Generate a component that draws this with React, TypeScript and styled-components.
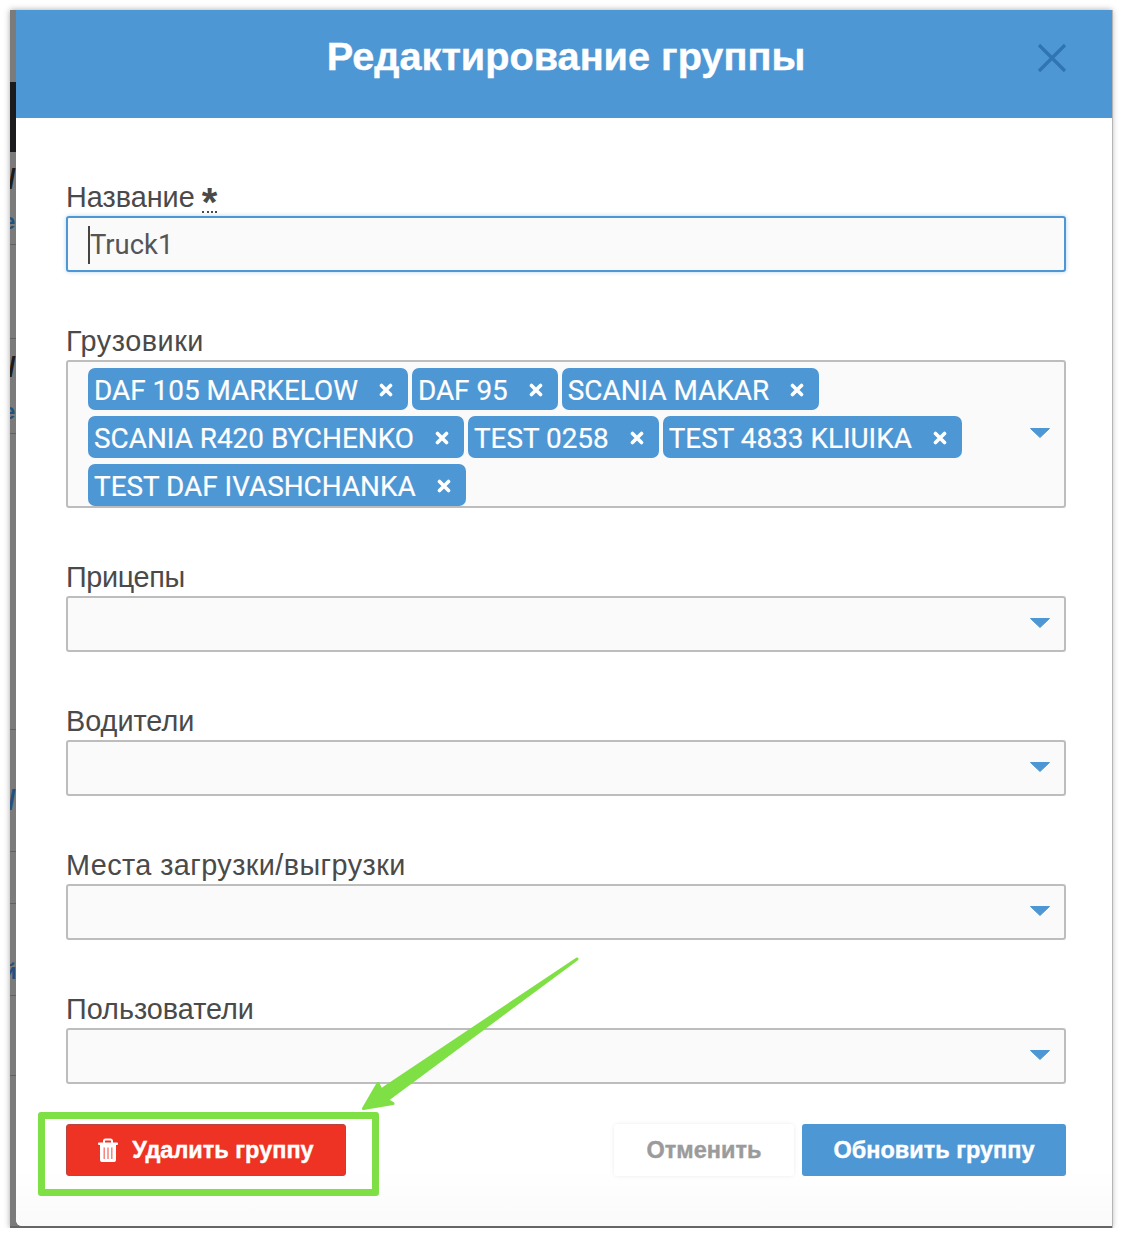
import React from "react";
import styled, { createGlobalStyle } from "styled-components";

const Global = createGlobalStyle`
  html, body { margin: 0; padding: 0; background: #fff; }
  * { box-sizing: border-box; }
`;

const Shot = styled.div`
  width: 1102px;
  height: 1218px;
  margin: 10px 0 0 10px;
  display: flex;
  background: #7b7b7b;
  border-bottom: 2px solid #666;
  box-shadow: 1px 0 0 #b5b5b5, 0 0 6px rgba(0, 0, 0, 0.35);
  position: relative;
`;

const Backdrop = styled.div`
  width: 6px;
  flex: none;
  position: relative;
  overflow: hidden;
  background: #7b7b7b;
`;

const BackdropBlock = styled.div`
  position: absolute;
  left: 0;
  top: 72px;
  width: 6px;
  height: 70px;
  background: #1b1b1d;
`;

const BackdropLine = styled.div<{ $top: number }>`
  position: absolute;
  left: 0;
  top: ${(p) => p.$top}px;
  width: 6px;
  height: 1px;
  background: #606060;
`;

const BackdropGlyph = styled.span<{ $top: number; $dark?: boolean; $left: number; $size: number }>`
  position: absolute;
  left: ${(p) => p.$left}px;
  top: ${(p) => p.$top}px;
  font: bold ${(p) => p.$size}px/24px "Liberation Sans", sans-serif;
  color: ${(p) => (p.$dark ? "#1b1b1d" : "#23507c")};
`;

const Modal = styled.div`
  flex: 1;
  display: flex;
  flex-direction: column;
  background: #fff;
  border-bottom-left-radius: 6px;
  overflow: hidden;
`;

const Header = styled.header`
  height: 108px;
  flex: none;
  background: #4e97d5;
  display: flex;
  align-items: center;
  justify-content: center;
  position: relative;
  padding: 0 0 16px 4px;
`;

const Title = styled.h1`
  margin: 0;
  font: bold 39.7px/44px "Liberation Sans", Arial, sans-serif;
  -webkit-text-stroke: 0.4px #fff;
  color: #fff;
`;

const CloseIcon = styled.svg`
  position: absolute;
  right: 45px;
  top: 33px;
  width: 30px;
  height: 30px;
`;

const Form = styled.div`
  flex: 1;
  display: flex;
  flex-direction: column;
  gap: 52px;
  padding: 62px 46px 0 50px;
`;

const Field = styled.div`
  display: flex;
  flex-direction: column;
`;

const Label = styled.label<{ $track?: number }>`
  height: 36px;
  font: 28.8px/35px "Liberation Sans", Arial, sans-serif;
  letter-spacing: ${(p) => p.$track ?? 0}px;
  color: #4a4a4a;
  white-space: nowrap;
`;

const Required = styled.abbr`
  display: inline-block;
  vertical-align: top;
  width: 15px;
  height: 31px;
  margin: 2px 0 0 -1px;
  font-size: 40px;
  font-weight: bold;
  line-height: 40px;
  text-decoration: none;
  border-bottom: 2px dotted #4a4a4a;
`;

const TextBox = styled.div`
  height: 56px;
  background: #fafafa;
  border: 2px solid #4e97d5;
  border-radius: 3px;
  box-shadow: 0 0 4px rgba(78, 151, 213, 0.4);
  display: flex;
  align-items: center;
  padding-left: 20px;
`;

const TextValue = styled.span`
  font: 27.4px/38px Roboto, sans-serif;
  color: #555;
  border-left: 2px solid #444;
  margin-top: 2px;
`;

const SelectBox = styled.div<{ $multi?: boolean }>`
  min-height: 56px;
  background: #fafafa;
  border: 2px solid #bdbdbd;
  border-radius: 3px;
  position: relative;
  padding: ${(p) => (p.$multi ? "6px 60px 0 20px" : "0")};
  display: flex;
  flex-wrap: wrap;
  gap: 6px 4px;
`;

const Caret = styled.svg`
  position: absolute;
  right: 14px;
  top: 50%;
  margin-top: -6px;
  width: 20px;
  height: 10px;
`;

const Tag = styled.span`
  height: 42px;
  display: inline-flex;
  align-items: center;
  gap: 21px;
  padding: 4px 15px 0 6px;
  background: #4e97d5;
  border-radius: 7px;
  color: #fff;
  font: 27.9px/34px Roboto, sans-serif;
  -webkit-text-stroke: 0.2px #fff;
  white-space: nowrap;
`;

const TagX = styled.svg`
  width: 14px;
  height: 14px;
  flex: none;
  margin-top: -2px;
`;

const Footer = styled.footer`
  height: 142px;
  flex: none;
  display: flex;
  align-items: flex-start;
  justify-content: space-between;
  padding: 40px 46px 0 50px;
  background: linear-gradient(#fff 60%, #fafafa);
`;

const ButtonGroup = styled.div`
  display: flex;
  gap: 8px;
`;

const Button = styled.button<{ $kind: "danger" | "ghost" | "primary" }>`
  height: 52px;
  border-radius: 3px;
  display: inline-flex;
  align-items: center;
  justify-content: center;
  font: bold 23.5px/30px "Liberation Sans", Arial, sans-serif;
  -webkit-text-stroke: 0.4px currentColor;
  padding: 0;
  width: ${(p) => (p.$kind === "danger" ? 280 : p.$kind === "ghost" ? 180 : 264)}px;
  gap: ${(p) => (p.$kind === "danger" ? 14 : 0)}px;
  background: ${(p) => (p.$kind === "danger" ? "#ee3324" : p.$kind === "ghost" ? "#fff" : "#4e97d5")};
  color: ${(p) => (p.$kind === "ghost" ? "#9b9b9b" : "#fff")};
  border: ${(p) => (p.$kind === "danger" ? "1px solid #b8443f" : "none")};
  box-shadow: ${(p) => (p.$kind === "ghost" ? "0 0 4px rgba(0,0,0,0.08)" : "none")};
`;

const TrashIcon = styled.svg`
  width: 20px;
  height: 24px;
  flex: none;
`;

const Highlight = styled.div`
  position: absolute;
  left: 28px;
  top: 1102px;
  width: 341px;
  height: 84px;
  border: 7px solid #7fe045;
  border-radius: 3px;
  pointer-events: none;
`;

const Arrow = styled.svg`
  position: absolute;
  left: 340px;
  top: 940px;
  width: 250px;
  height: 180px;
  pointer-events: none;
`;

const trucks = [
  "DAF 105 MARKELOW",
  "DAF 95",
  "SCANIA MAKAR",
  "SCANIA R420 BYCHENKO",
  "TEST 0258",
  "TEST 4833 KLIUIKA",
  "TEST DAF IVASHCHANKA",
];

const emptySelects = [
  { label: "Прицепы", track: -0.35 },
  { label: "Водители", track: 0 },
  { label: "Места загрузки/выгрузки", track: 0.43 },
  { label: "Пользователи", track: 0 },
];
const lines = [234, 328, 423, 719, 841, 893, 985, 1065];
const glyphs = [
  { top: 157, left: -2, size: 28, text: "/", dark: true },
  { top: 200, left: -7, size: 22, text: "е" },
  { top: 345, left: -2, size: 28, text: "/", dark: true },
  { top: 390, left: -7, size: 22, text: "е" },
  { top: 778, left: -2, size: 28, text: "/" },
  { top: 950, left: -7, size: 22, text: "й" },
];

const DownCaret = () => (
  <Caret viewBox="0 0 20 10">
    <path d="M0.5 0.5h19L10 9.5z" fill="#4e97d5" stroke="#4e97d5" strokeLinejoin="round" />
  </Caret>
);

export default function App() {
  return (
    <>
      <Global />
      <Shot>
        <Backdrop>
          <BackdropBlock />
          {lines.map((t) => (
            <BackdropLine key={t} $top={t} />
          ))}
          {glyphs.map((g) => (
            <BackdropGlyph key={g.top} $top={g.top} $left={g.left} $size={g.size} $dark={g.dark}>
              {g.text}
            </BackdropGlyph>
          ))}
        </Backdrop>
        <Modal>
          <Header>
            <Title>Редактирование группы</Title>
            <CloseIcon viewBox="0 0 30 30">
              <path d="M2 2L28 28M28 2L2 28" stroke="#2f74b3" strokeWidth="3.2" fill="none" />
            </CloseIcon>
          </Header>
          <Form>
            <Field>
              <Label>
                Название <Required title="required">*</Required>
              </Label>
              <TextBox>
                <TextValue>Truck1</TextValue>
              </TextBox>
            </Field>
            <Field>
              <Label $track={0.55}>Грузовики</Label>
              <SelectBox $multi>
                {trucks.map((t) => (
                  <Tag key={t}>
                    {t}
                    <TagX viewBox="0 0 14 14">
                      <path d="M2.5 2.5L11.5 11.5M11.5 2.5L2.5 11.5" stroke="#fff" strokeWidth="3.6" strokeLinecap="round" />
                    </TagX>
                  </Tag>
                ))}
                <DownCaret />
              </SelectBox>
            </Field>
            {emptySelects.map((s) => (
              <Field key={s.label}>
                <Label $track={s.track}>{s.label}</Label>
                <SelectBox>
                  <DownCaret />
                </SelectBox>
              </Field>
            ))}
          </Form>
          <Footer>
            <Button $kind="danger">
              <TrashIcon viewBox="0 0 20 24">
                <path d="M6 5V3a1.5 1.5 0 0 1 1.5-1.5h5A1.5 1.5 0 0 1 14 3v2" stroke="#fff" strokeWidth="2" fill="none" />
                <rect x="0" y="4.5" width="20" height="2.6" rx="1" fill="#fff" />
                <path d="M2 7h16v15a2 2 0 0 1-2 2H4a2 2 0 0 1-2-2z" fill="#fff" />
                <path d="M5.5 9.5h1.4v11.5H5.5zM9.3 9.5h1.4v11.5H9.3zM13.1 9.5h1.4v11.5h-1.4z" fill="#ee3324" opacity="0.65" />
              </TrashIcon>
              Удалить группу
            </Button>
            <ButtonGroup>
              <Button $kind="ghost">Отменить</Button>
              <Button $kind="primary">Обновить группу</Button>
            </ButtonGroup>
          </Footer>
        </Modal>
        <Arrow viewBox="350 950 250 180">
          <path
            d="M577 959L381 1090L378 1083.5L363.5 1108.5L393 1103.5L387 1100Z"
            fill="#7fe045"
            stroke="#7fe045"
            strokeWidth="3"
            strokeLinejoin="round"
          />
        </Arrow>
        <Highlight />
      </Shot>
    </>
  );
}
